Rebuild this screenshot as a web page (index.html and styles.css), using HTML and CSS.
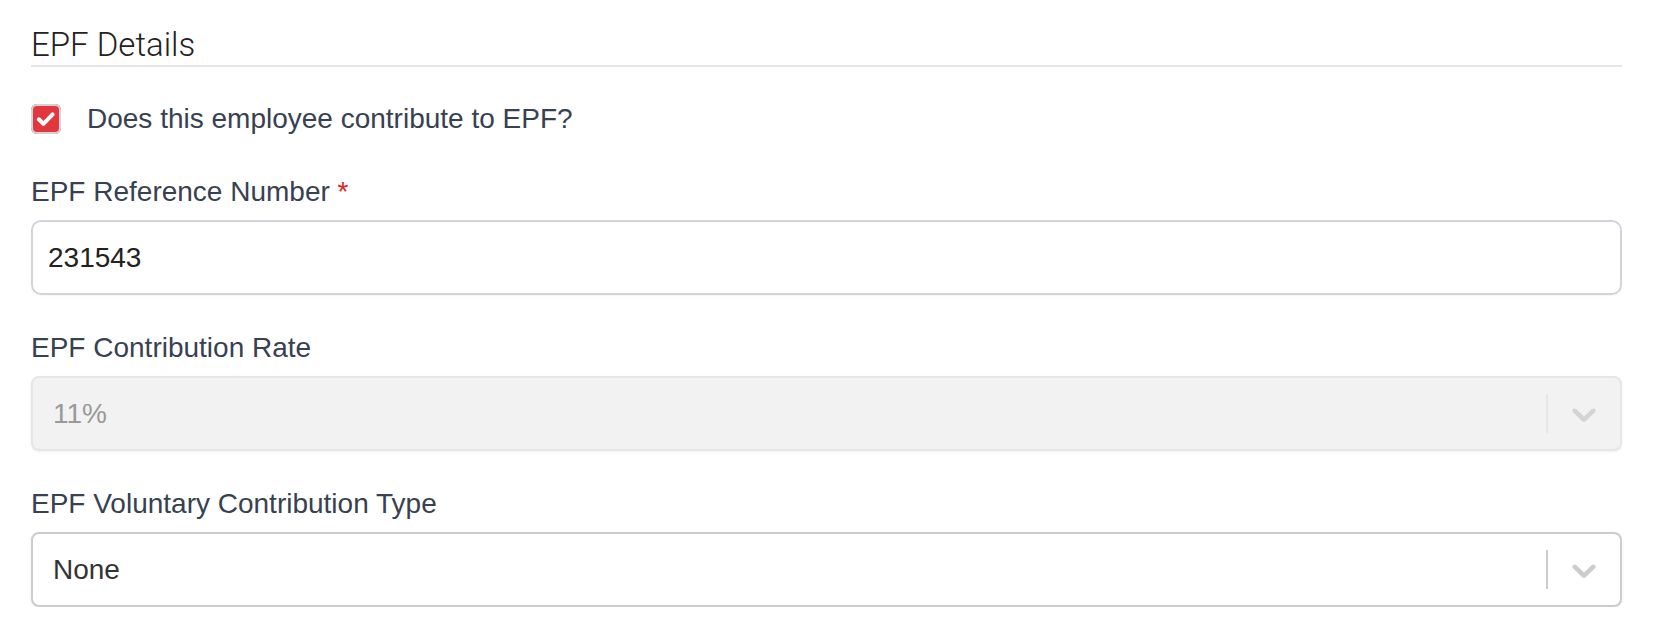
FILE: index.html
```html
<!DOCTYPE html>
<html lang="en">
<head>
<meta charset="utf-8">
<title>EPF Details</title>
<link rel="stylesheet" href="styles.css">
</head>
<body>
<div class="page">
  <h2 class="section-title">EPF Details</h2>

  <label class="check-row">
    <span class="checkbox">
      <svg viewBox="0 0 30 30" width="30" height="30"><path d="M7.8 15.3 L12.4 19.8 L21.6 10.4" fill="none" stroke="#fff" stroke-width="4" stroke-linecap="round" stroke-linejoin="round"/></svg>
    </span>
    <span class="check-label">Does this employee contribute to EPF?</span>
  </label>

  <div class="field">
    <div class="field-label">EPF Reference Number <span class="req">*</span></div>
    <div class="text-input">231543</div>
  </div>

  <div class="field">
    <div class="field-label">EPF Contribution Rate</div>
    <div class="select disabled">
      <div class="select-value">11%</div>
      <span class="select-sep"></span>
      <span class="select-ind">
        <svg viewBox="0 0 20 20" width="40" height="40"><path d="M4.516 7.548c0.436-0.446 1.043-0.481 1.576 0l3.908 3.747 3.908-3.747c0.533-0.481 1.141-0.446 1.574 0 0.436 0.445 0.408 1.197 0 1.615-0.406 0.418-4.695 4.502-4.695 4.502-0.217 0.223-0.502 0.335-0.787 0.335s-0.57-0.112-0.789-0.335c0 0-4.287-4.084-4.695-4.502s-0.436-1.170 0-1.615z"/></svg>
      </span>
    </div>
  </div>

  <div class="field">
    <div class="field-label">EPF Voluntary Contribution Type</div>
    <div class="select">
      <div class="select-value">None</div>
      <span class="select-sep"></span>
      <span class="select-ind">
        <svg viewBox="0 0 20 20" width="40" height="40"><path d="M4.516 7.548c0.436-0.446 1.043-0.481 1.576 0l3.908 3.747 3.908-3.747c0.533-0.481 1.141-0.446 1.574 0 0.436 0.445 0.408 1.197 0 1.615-0.406 0.418-4.695 4.502-4.695 4.502-0.217 0.223-0.502 0.335-0.787 0.335s-0.57-0.112-0.789-0.335c0 0-4.287-4.084-4.695-4.502s-0.436-1.170 0-1.615z"/></svg>
      </span>
    </div>
  </div>
</div>
</body>
</html>
```

FILE: styles.css
```css
* { box-sizing: border-box; }
html, body { margin: 0; padding: 0; background: #fff; }
body { font-family: "Liberation Sans", Arial, sans-serif; }

.page {
  width: 1591px;
  margin-left: 31px;
  padding-top: 25px;
}

.section-title {
  margin: 0;
  font-family: Roboto, "Liberation Sans", sans-serif;
  font-weight: 300;
  font-size: 33px;
  line-height: 40px;
  color: #222;
  border-bottom: 2px solid #e5e5ea;
}

.check-row {
  display: flex;
  align-items: center;
  gap: 26px;
  margin-top: 36px;
  height: 32px;
}

.checkbox {
  width: 30px;
  height: 30px;
  border-radius: 6px;
  background: #e3373f;
  box-shadow: inset 0 0 0 2px #d2d2d7;
  display: flex;
}
.checkbox svg { display: block; }

.check-label {
  font-size: 28px;
  line-height: 32px;
  color: #374151;
}

.field { margin-top: 41px; }
.field + .field { margin-top: 37px; }

.field-label {
  font-size: 28px;
  line-height: 32px;
  color: #374151;
  margin-bottom: 12px;
}
.req { color: #e02424; }

.text-input {
  height: 75px;
  border: 2px solid #d1d5db;
  border-radius: 10px;
  padding: 0 15px;
  display: flex;
  align-items: center;
  font-size: 28px;
  color: #222;
  box-shadow: 0 1px 2px rgba(0,0,0,0.04);
}

.select {
  height: 75px;
  border: 2px solid #ccc;
  border-radius: 8px;
  display: flex;
  align-items: stretch;
  background: #fff;
  box-shadow: 0 1px 3px rgba(0,0,0,0.06);
}
.select-value {
  flex: 1;
  display: flex;
  align-items: center;
  padding: 0 16px 0 20px;
  font-size: 28px;
  color: #333;
}
.select-sep {
  width: 2px;
  margin: 16px 0;
  background: #ccc;
}
.select-ind {
  display: flex;
  align-items: center;
  padding: 0 16px;
}
.select-ind svg { display: block; fill: #ccc; }

.select.disabled {
  background: #f2f2f2;
  border-color: #e6e6e6;
}
.select.disabled .select-value { color: #999; }
.select.disabled .select-sep { background: #e6e6e6; }
.select.disabled .select-ind svg { fill: #d4d4d4; }
```
